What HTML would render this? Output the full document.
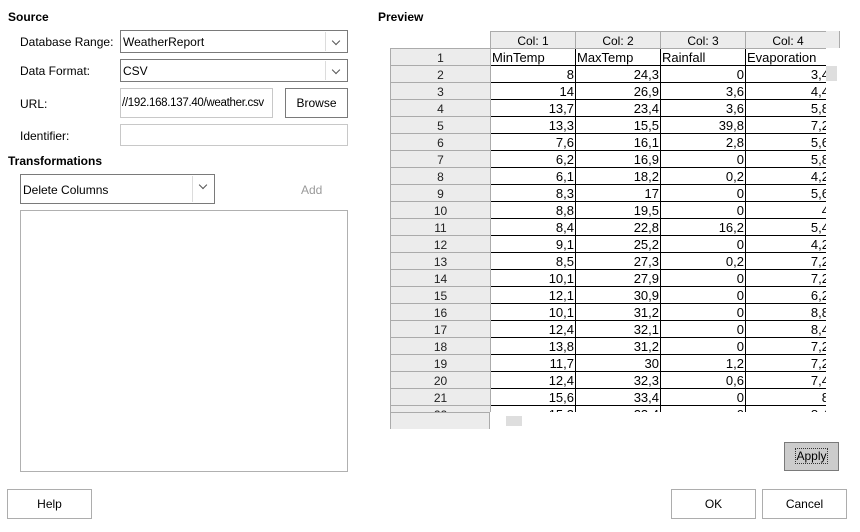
<!DOCTYPE html>
<html><head><style>
body{margin:0;width:860px;height:532px;background:#fff;font-family:"Liberation Sans",sans-serif;font-size:12px;color:#000;position:relative;overflow:hidden}
.a{position:absolute}
.b{font-weight:bold}
.box{position:absolute;border:1px solid #7a7a7a;box-sizing:border-box;background:#fff}
.dis{border-color:#c8c8c8}
.dd{position:absolute;right:1px;top:1px;bottom:1px;width:20px;border-left:1px solid #dcdcdc}
.dd:after{content:"";position:absolute;left:7px;top:6px;width:5px;height:5px;border-right:1px solid #555;border-bottom:1px solid #555;transform:rotate(45deg)}
.txt{position:absolute;left:2px;top:4px;white-space:nowrap}
.btn{position:absolute;border:1px solid #adadad;box-sizing:border-box;background:#fff;text-align:center}
.grid{position:absolute;left:390px;top:31px;width:436px;height:381px;overflow:hidden}
table{border-collapse:collapse;font-size:13px;table-layout:fixed;width:440px}
td{height:14px;padding:2px 1px 0 1px;border:1px solid #000;text-align:right;white-space:nowrap;overflow:hidden;line-height:14px}
td.rh{background:#ececec;border:1px solid #ababab;text-align:center;font-size:12px;color:#222}
tr.ch td{background:#ececec;border:1px solid #ababab;text-align:center;font-size:12px}
</style></head><body>
<div class="a b" style="left:8px;top:10px">Source</div>
<div class="a" style="left:20px;top:35px">Database Range:</div>
<div class="box" style="left:120px;top:30px;width:228px;height:23px"><span class="txt">WeatherReport</span><div class="dd"></div></div>
<div class="a" style="left:20px;top:64px">Data Format:</div>
<div class="box" style="left:120px;top:59px;width:228px;height:23px"><span class="txt">CSV</span><div class="dd"></div></div>
<div class="a" style="left:20px;top:97px">URL:</div>
<div class="box dis" style="left:120px;top:88px;width:153px;height:30px;overflow:hidden"><span class="txt" style="top:8px;left:1px;font-size:11.5px;letter-spacing:-0.3px">//192.168.137.40/weather.csv</span></div>
<div class="btn" style="left:285px;top:88px;width:63px;height:30px;border-color:#7a7a7a;line-height:28px">Browse</div>
<div class="a" style="left:20px;top:129px">Identifier:</div>
<div class="box dis" style="left:120px;top:124px;width:228px;height:22px"></div>
<div class="a b" style="left:8px;top:154px">Transformations</div>
<div class="box" style="left:20px;top:174px;width:195px;height:30px"><span class="txt" style="top:8px">Delete Columns</span><div class="dd"></div></div>
<div class="a" style="left:301px;top:183px;color:#9a9a9a">Add</div>
<div class="box dis" style="left:20px;top:210px;width:328px;height:262px;border-color:#b0b0b0"></div>
<div class="a b" style="left:378px;top:10px">Preview</div>
<div class="a" style="left:490px;top:31px;width:350px;height:17px;background:#ececec;border-right:1px solid #ababab;box-sizing:border-box"></div>
<div class="a" style="left:390px;top:412px;width:100px;height:17px;background:#ececec;border:1px solid #ababab;border-bottom:none;box-sizing:border-box"></div>
<div class="grid"><table>
<colgroup><col style="width:100px"><col style="width:85px"><col style="width:85px"><col style="width:85px"><col style="width:85px"></colgroup>
<tr class="ch"><td style="background:#fff;border:none;border-bottom:1px solid #ababab"></td><td>Col: 1</td><td>Col: 2</td><td>Col: 3</td><td>Col: 4</td></tr>
<tr><td class="rh">1</td><td style="text-align:left">MinTemp</td><td style="text-align:left">MaxTemp</td><td style="text-align:left">Rainfall</td><td style="text-align:left">Evaporation</td></tr>
<tr><td class="rh">2</td><td>8</td><td>24,3</td><td>0</td><td>3,4</td></tr>
<tr><td class="rh">3</td><td>14</td><td>26,9</td><td>3,6</td><td>4,4</td></tr>
<tr><td class="rh">4</td><td>13,7</td><td>23,4</td><td>3,6</td><td>5,8</td></tr>
<tr><td class="rh">5</td><td>13,3</td><td>15,5</td><td>39,8</td><td>7,2</td></tr>
<tr><td class="rh">6</td><td>7,6</td><td>16,1</td><td>2,8</td><td>5,6</td></tr>
<tr><td class="rh">7</td><td>6,2</td><td>16,9</td><td>0</td><td>5,8</td></tr>
<tr><td class="rh">8</td><td>6,1</td><td>18,2</td><td>0,2</td><td>4,2</td></tr>
<tr><td class="rh">9</td><td>8,3</td><td>17</td><td>0</td><td>5,6</td></tr>
<tr><td class="rh">10</td><td>8,8</td><td>19,5</td><td>0</td><td>4</td></tr>
<tr><td class="rh">11</td><td>8,4</td><td>22,8</td><td>16,2</td><td>5,4</td></tr>
<tr><td class="rh">12</td><td>9,1</td><td>25,2</td><td>0</td><td>4,2</td></tr>
<tr><td class="rh">13</td><td>8,5</td><td>27,3</td><td>0,2</td><td>7,2</td></tr>
<tr><td class="rh">14</td><td>10,1</td><td>27,9</td><td>0</td><td>7,2</td></tr>
<tr><td class="rh">15</td><td>12,1</td><td>30,9</td><td>0</td><td>6,2</td></tr>
<tr><td class="rh">16</td><td>10,1</td><td>31,2</td><td>0</td><td>8,8</td></tr>
<tr><td class="rh">17</td><td>12,4</td><td>32,1</td><td>0</td><td>8,4</td></tr>
<tr><td class="rh">18</td><td>13,8</td><td>31,2</td><td>0</td><td>7,2</td></tr>
<tr><td class="rh">19</td><td>11,7</td><td>30</td><td>1,2</td><td>7,2</td></tr>
<tr><td class="rh">20</td><td>12,4</td><td>32,3</td><td>0,6</td><td>7,4</td></tr>
<tr><td class="rh">21</td><td>15,6</td><td>33,4</td><td>0</td><td>8</td></tr>
<tr><td class="rh">22</td><td>15,3</td><td>23,4</td><td>0</td><td>8,4</td></tr>
</table></div>
<div class="a" style="left:506px;top:416px;width:16px;height:10px;background:#dedede"></div>
<div class="a" style="left:826px;top:66px;width:11px;height:15px;background:#dedede"></div>
<div class="btn" style="left:784px;top:442px;width:55px;height:29px;background:#ccc;border-color:#7a7a7a;line-height:27px"><span style="outline:1px dotted #333">Apply</span></div>
<div class="btn" style="left:7px;top:489px;width:85px;height:30px;line-height:28px">Help</div>
<div class="btn" style="left:671px;top:489px;width:85px;height:30px;line-height:28px">OK</div>
<div class="btn" style="left:762px;top:489px;width:85px;height:30px;line-height:28px">Cancel</div>
</body></html>
